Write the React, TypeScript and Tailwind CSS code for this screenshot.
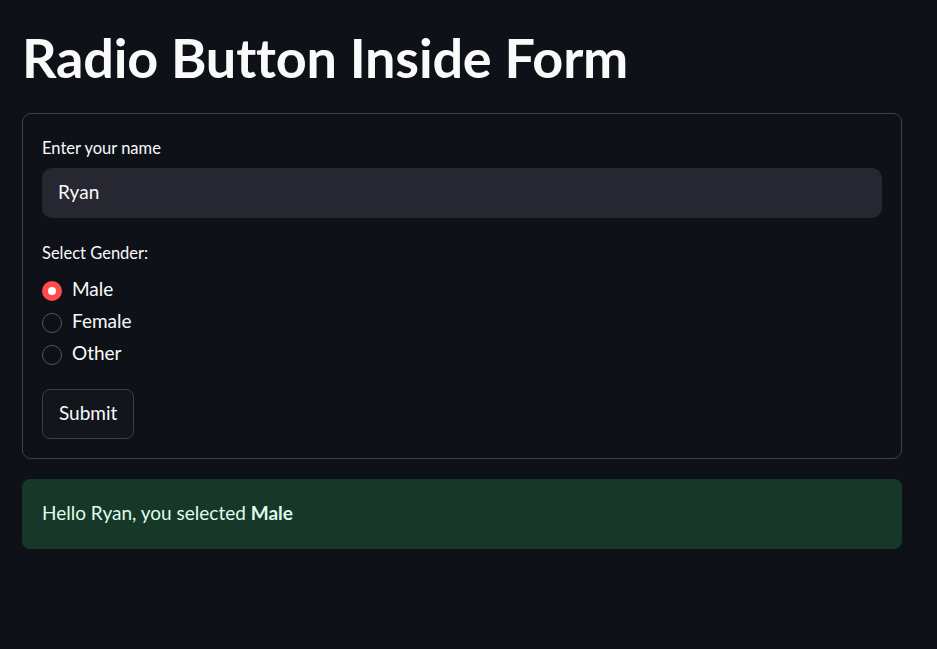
import { useState } from 'react';

const options = ['Male', 'Female', 'Other'];

export default function App() {
  const [name, setName] = useState('Ryan');
  const [gender, setGender] = useState('Male');
  const [submitted, setSubmitted] = useState({ name: 'Ryan', gender: 'Male' });

  return (
    <div className="min-h-screen bg-[#0e1117] text-[#fafafa] font-['Lato',sans-serif]">
      <div className="w-[880px] ml-[22px] pt-[25px]">
        <h1 className="text-[54px] leading-[65px] font-bold tracking-[-0.2px]">Radio Button Inside Form</h1>

        {/* Form container */}
        <form
          onSubmit={(e) => {
            e.preventDefault();
            setSubmitted({ name, gender });
          }}
          className="mt-[23px] border border-[#3d4045] rounded-[9px] px-[19px] pt-[24px] pb-[19px]"
        >
          <label className="block text-[16.5px] leading-[20px]">Enter your name</label>
          <input
            value={name}
            onChange={(e) => setName(e.target.value)}
            className="mt-[10px] w-full h-[50px] rounded-[10px] bg-[#262730] px-4 pb-[3px] text-[19px] text-[#fafafa] outline-none"
          />

          <div className="mt-[25px] text-[16.5px] leading-[20px]">Select Gender:</div>
          <div className="mt-[12px] flex flex-col">
            {options.map((opt) => {
              const checked = gender === opt;
              return (
                <button
                  type="button"
                  key={opt}
                  onClick={() => setGender(opt)}
                  className="h-[32px] flex items-center gap-[10px] text-left cursor-pointer"
                >
                  {checked ? (
                    <span className="w-[20px] h-[20px] rounded-full bg-[#ff4b4b] flex items-center justify-center">
                      <span className="w-[8px] h-[8px] rounded-full bg-white" />
                    </span>
                  ) : (
                    <span className="w-[20px] h-[20px] rounded-full border border-[#55585e]" />
                  )}
                  <span className="text-[19px] leading-[22px] -mt-[4px]">{opt}</span>
                </button>
              );
            })}
          </div>

          <button
            type="submit"
            className="mt-[18px] h-[50px] px-4 pb-[2px] rounded-[8px] border border-[#3d4045] bg-[#12151c] text-[19px] hover:border-[#ff4b4b] hover:text-[#ff4b4b] cursor-pointer"
          >
            Submit
          </button>
        </form>

        {/* Success alert */}
        <div className="mt-[20px] h-[70px] rounded-[8px] bg-[#173828] px-5 pb-[2px] flex items-center text-[19px] text-[#dffde9]">
          <span>
            Hello {submitted.name}, you selected <strong className="font-bold">{submitted.gender}</strong>
          </span>
        </div>
      </div>
    </div>
  );
}
